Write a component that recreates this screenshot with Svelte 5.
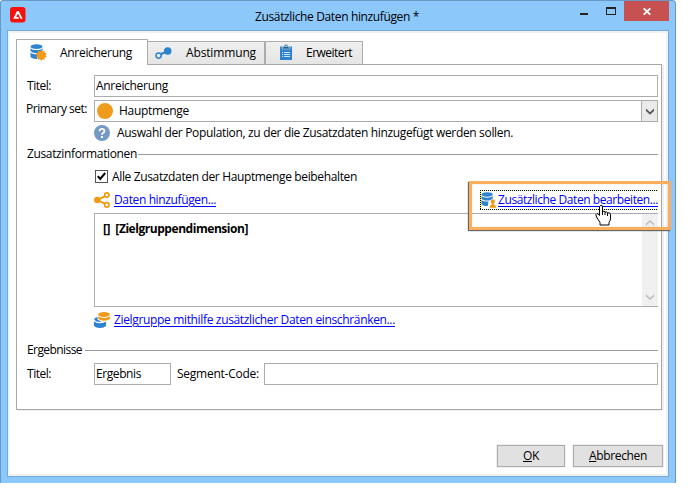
<script>
  // Spreads a label over its nominal dialog width through letter-spacing.
  function fit(node, width) {
    const natural = node.getBoundingClientRect().width;
    node.style.letterSpacing = `${(width - natural) / node.textContent.length}px`;
  }
</script>

{#snippet database()}
  <ellipse cx="6.5" cy="2.6" rx="6" ry="2.4" />
  <path d="M.5 4.2Q2 6.1 6.5 6.1T12.5 4.2V6.8Q11 9.1 6.5 9.1T.5 6.8Z" />
  <path d="M.5 8.4Q2 10.2 6.5 10.2L8 10.1 7.2 14.9Q2 15.2.5 12.8Z" />
{/snippet}

<div class="window">
  <header>
    <svg class="app" viewBox="0 0 16 16"><rect width="15.5" height="15.5" rx="3" fill="#f8100b" /><path d="M3.2 11.7 7 4h1.8l3.7 7.7h-2L8 6.4 6.2 10h2l.9 1.7Z" fill="#fff" /></svg>
    <h1><span use:fit={164}>Zusätzliche Daten hinzufügen *</span></h1>
    <div class="controls">
      <i class="min"></i><i class="max"></i>
      <button class="close" aria-label="Schließen"><svg width="8" height="7" viewBox="0 0 8 7"><path d="M.7.3 7.3 6.7M7.3.3.7 6.7" stroke="#fff" stroke-width="1.8" /></svg></button>
    </div>
  </header>

  <main>
    <nav>
      <div class="tab active">
        <svg viewBox="0 0 17 17"><g fill="#2d83d0">{@render database()}</g><path d="m11.5 5.400 1.200 2 2.100-.8-.2 2.100 2.200.5-1.200 2 1.200 2-2.300.4.1 2.200-2.100-.6-1.200 1.800-1.300-1.800-2.200.6.2-2.200-2-.5 1.100-1.900-1-2 2-.5-.2-2.100 2.200.8Z" fill="#ef9a19" /></svg>
        <span use:fit={72}>Anreicherung</span>
      </div>
      <div class="tab second">
        <svg viewBox="0 0 17 17"><path d="m5 10.500 7-3" stroke="#2d83d0" stroke-width="2" /><circle cx="3.600" cy="11.600" r="2.600" fill="#eee" stroke="#2d83d0" stroke-width="1.500" /><circle cx="12.700" cy="7" r="3.800" fill="#2d83d0" /></svg>
        <span use:fit={70}>Abstimmung</span>
      </div>
      <div class="tab third">
        <svg viewBox="0 0 17 17"><path d="M1 2.500h12V16H1Z" fill="#2d83d0" /><path d="M3 3h2l.7-2.500h2.600L9 3h2v2H3Z" fill="#20608e" stroke="#c9e2f6" stroke-width=".6" /><circle cx="7" cy="2.300" r=".8" fill="#fff" /><path d="M3 8.500h1m1 0h6M3 10.500h1m1 0h6M3 12.500h1m1 0h6" stroke="#cce5fa" stroke-width="1" /></svg>
        <span use:fit={46}>Erweitert</span>
      </div>
    </nav>

    <section class="panel">
      <div class="row title"><label for="title"><span use:fit={24}>Titel:</span></label><div id="title" class="field wide"><span use:fit={72}>Anreicherung</span></div></div>
      <div class="row set">
        <label for="set"><span use:fit={61}>Primary set:</span></label>
        <div id="set" class="field wide combo">
          <i class="dot"></i><span use:fit={70}>Hauptmenge</span>
          <b class="drop"><svg width="8" height="7" viewBox="0 0 8 7"><path d="M0 .5 4 4.200 8 .5V3L4 6.700 0 3Z" fill="#555" /></svg></b>
        </div>
      </div>
      <div class="row help">
        <svg width="16" height="16" viewBox="0 0 16 16"><circle cx="8" cy="8" r="8" fill="#7698c7" /><path d="M5.600 6.200Q5.600 3.900 8 3.900t2.400 2Q10.400 7.200 8.900 8 8 8.500 8 9.700" fill="none" stroke="#fff" stroke-width="1.800" /><rect x="7" y="11" width="2" height="2" fill="#fff" /></svg>
        <span use:fit={396}>Auswahl der Population, zu der die Zusatzdaten hinzugefügt werden sollen.</span>
      </div>
      <div class="row group"><span use:fit={110}>Zusatzinformationen</span><hr /></div>
      <div class="row keep">
        <i class="check"><svg width="11" height="11" viewBox="0 0 11 11"><path d="m1.800 5.200 2.400 2.700L9.200 2" fill="none" stroke="#000" stroke-width="2" /></svg></i>
        <span use:fit={245}>Alle Zusatzdaten der Hauptmenge beibehalten</span>
      </div>
      <div class="row links">
        <svg width="16" height="16" viewBox="0 0 16 16"><path d="M12.500 3.300 3.500 8l9 4.700" fill="none" stroke="#ef9a0c" stroke-width="1.900" /><circle cx="3.300" cy="8" r="3.200" fill="#ef9a0c" /><g fill="#fff" stroke="#ef9a0c" stroke-width="1.700"><circle cx="12.800" cy="3.100" r="2.200" /><circle cx="12.800" cy="12.900" r="2.200" /></g></svg>
        <span class="link" use:fit={102}>Daten hinzufügen...</span>
        <div class="focus">
          <svg width="16" height="16" viewBox="0 0 17 17"><g fill="#2d83d0">{@render database()}</g><path d="M12.500 7.500a2.500 2.500 0 0 1 1.500 4.500v1.500l2.200.8V17H9v-2.700l2-.8V12a2.500 2.500 0 0 1 1.500-4.500Z" fill="#ef9a19" stroke="#fff" stroke-width=".5" /></svg>
          <span class="link" use:fit={160}>Zusätzliche Daten bearbeiten...</span>
        </div>
      </div>
      <div class="list">
        <strong><span use:fit={145}>[]&nbsp; [Zielgruppendimension]</span></strong>
        <div class="scroll">
          <svg width="8" height="6" viewBox="0 0 8 6"><path d="M0 5.800 4 2l4 3.800V3.600L4 0 0 3.600Z" fill="#bdbdbd" /></svg>
          <svg width="8" height="6" viewBox="0 0 8 6"><path d="M0 .2 4 4 8 .2v2.200L4 6 0 2.400Z" fill="#bdbdbd" /></svg>
        </div>
      </div>
      <div class="row restrict">
        <svg width="16" height="16" viewBox="0 0 16 16"><path d="M0 9.300q2 2 6 1.900t6-1.700V14q-2 2-6 2t-6-2Z" fill="#2d83d0" /><path d="M.2 7.800q0-2.300 3.300-2.900v2.700l4 2.300q-5 .7-7.300-2.100Z" fill="#2d83d0" /><ellipse cx="10" cy="2.500" rx="5.800" ry="2.400" fill="#ef9a19" /><path d="M4.200 4.200q2 1.700 5.800 1.700t6-1.700v2.500q-2 2.100-6 2.100T4.200 6.700Z" fill="#ef9a19" /></svg>
        <span class="link" use:fit={281}>Zielgruppe mithilfe zusätzlicher Daten einschränken...</span>
      </div>
      <div class="row group results"><span use:fit={55}>Ergebnisse</span><hr /></div>
      <div class="row output">
        <label for="result"><span use:fit={24}>Titel:</span></label><div id="result" class="field short"><span use:fit={45}>Ergebnis</span></div>
        <label class="seg" for="code"><span use:fit={82}>Segment-Code:</span></label><div id="code" class="field wide"></div>
      </div>
    </section>

    <footer>
      <button class="ok"><span use:fit={16}><u>O</u>K</span></button>
      <button class="cancel"><span use:fit={58}><u>A</u>bbrechen</span></button>
    </footer>
  </main>

  <div class="highlight"></div>
  <svg class="cursor" width="18" height="22" viewBox="0 0 18 22"><path d="M5.500 1.500Q7.500.5 7.500 3v4.500q2-1 2.500.5 2-.7 2.500.8 3-.7 3 2v4q0 2-1.500 3.500V21h-9v-2.500L1.500 13Q0 10 2 9.500q1 0 2.500 2V3q0-1 1-1.500Z" fill="#fff" stroke="#000" /><path d="M7.500 7v4M10 8v3M12.500 9v3" stroke="#000" /></svg>
</div>

<style>
  :global(body) { background: #fff; }
  .window {
    position: relative; box-sizing: border-box; width: 676px; height: 483px;
    padding: 0 7px 6px 6px; border: 1px solid #6998c5; border-bottom: 0;
    border-radius: 3px 4px 0 0; background: #8cc8fa; color: #000;
    font: 12px/16px "Open Sans", "Noto Sans", sans-serif; white-space: nowrap;
  }
  svg { display: block; flex: none; }
  header { display: flex; height: 29px; position: relative; }
  .app { width: 16px; height: 16px; margin: 6px 0 0 3px; }
  h1 { margin: 8px 0 0 229px; font: inherit; }
  .controls { display: flex; margin-left: auto; margin-right: -1px; }
  .min { width: 8px; height: 2px; margin: 12px 18px 0 0; background: #222; }
  .max { box-sizing: border-box; width: 10px; height: 8px; margin: 6px 8px 0 0; border: 1px solid #222; border-top-width: 2px; }
  .close { display: flex; align-items: center; justify-content: center; width: 45px; height: 20px; padding: 0; border: 0; background: #c75050; }
  main { box-sizing: border-box; width: 662px; height: 447px; padding: 8px 5px 0 6px; border: 1px solid #75a9d9; background: #fff; box-shadow: inset 0 0 0 2px #f1f1f1; }
  nav { display: flex; align-items: flex-end; height: 25px; padding-left: 2px; }
  .tab { box-sizing: border-box; display: flex; align-items: center; height: 23px; border: 1px solid #ababb0; border-bottom: 0; background: linear-gradient(#efefef, #e5e5e5); }
  .tab svg { width: 17px; height: 17px; margin-top: -1px; }
  .tab.active { position: relative; z-index: 1; width: 132px; height: 26px; margin-bottom: -1px; padding: 1px 0 0 13px; background: #fff; }
  .active span { margin-left: 13px; }
  .second { width: 117px; padding-left: 7px; border-left: 0; }
  .second span { margin-left: 14px; }
  .third { width: 98px; padding-left: 13px; }
  .third span { margin-left: 10px; }
  .panel { box-sizing: border-box; width: 646px; height: 346px; margin-left: 2px; padding: 10px 3px 0 10px; border: 1px solid #a7a7aa; box-shadow: 2px 1px #efefef; }
  .row { display: flex; align-items: center; }
  label { width: 67px; flex: none; }
  .field { box-sizing: border-box; display: flex; align-items: center; height: 22px; padding-left: 1px; border: 1px solid #ababb0; }
  .wide { flex: 1; }
  .title { height: 22px; }
  .title label { margin-top: -1px; }
  .set { height: 22px; margin-top: 3px; }
  .set label { margin: -4px 1px 0 -1px; width: 67px; }
  .combo { padding-left: 2px; }
  .dot { width: 16px; height: 16px; border-radius: 50%; background: #ef9c1e; }
  .combo span { margin-left: 6px; }
  .drop { display: flex; align-items: center; justify-content: center; width: 15px; height: 20px; margin-left: auto; border-left: 1px solid #ababb0; background: #eaeaea; }
  .help { height: 16px; margin: 3px 0 0 67px; }
  .help span { margin-left: 7px; }
  .group { height: 16px; margin-top: 5px; }
  hr { flex: 1; height: 1px; margin: 0 0 0 1px; border: 0; background: #999a9c; }
  .results hr { margin-left: 3px; }
  .keep { height: 16px; margin: 7px 0 0 68px; }
  .check { box-sizing: border-box; width: 13px; height: 13px; border: 1px solid #555; margin-top: -1px; }
  .keep span { margin-left: 4px; }
  .links { height: 20px; margin: 5px 0 0 67px; }
  .link { color: #00f; text-decoration: underline; text-underline-offset: 2px; }
  .links > .link { margin-left: 4px; }
  .focus {
    box-sizing: border-box; display: flex; align-items: center; width: 178px; height: 20px; margin-left: auto; padding-left: 1px;
    background:
      repeating-linear-gradient(90deg, #000 0 1px, #ff0 1px 2px) top / 100% 1px no-repeat,
      repeating-linear-gradient(90deg, #000 0 1px, #ff0 1px 2px) bottom / 100% 1px no-repeat,
      repeating-linear-gradient(#000 0 1px, #ff0 1px 2px) left / 1px 100% no-repeat;
  }
  .focus .link { margin-left: 1px; }
  .list { box-sizing: border-box; display: flex; justify-content: space-between; height: 94px; margin: 3px 0 0 67px; padding-left: 8px; border: 1px solid #ababb0; border-right: 0; }
  strong { padding-top: 7px; font-weight: 700; }
  .scroll { box-sizing: border-box; display: flex; flex-direction: column; align-items: center; justify-content: space-between; width: 16px; padding: 6px 0; background: #f0f0f0; }
  .restrict { height: 16px; margin: 5px 0 0 67px; }
  .restrict span { margin-left: 4px; }
  .results { margin-top: 14px; }
  .output { height: 22px; margin-top: 5px; }
  .short { width: 77px; }
  .seg { width: 87px; margin-left: 6px; }
  footer { display: flex; justify-content: flex-end; gap: 8px; margin-top: 35px; }
  footer button { box-sizing: border-box; height: 22px; padding: 0; border: 1px solid #adadad; background: #e1e1e1; box-shadow: 0 0 0 1px #f0f0f0; color: #000; font: inherit; }
  .ok { width: 68px; }
  .cancel { width: 90px; }
  .highlight { position: absolute; left: 468px; top: 180px; width: 196px; height: 43px; border: 3px solid #fbae5c; box-shadow: -1px 1px 1px #666, inset 0 0 1px #999; }
  .cursor { position: absolute; left: 594px; top: 203px; }
</style>
